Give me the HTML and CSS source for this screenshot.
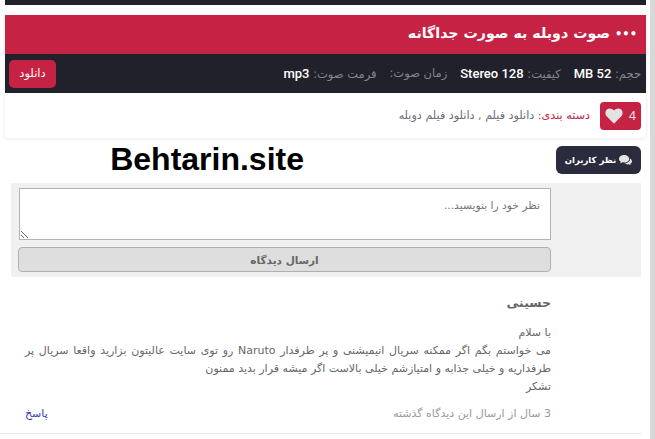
FILE: index.html
```html
<!DOCTYPE html>
<html lang="fa" dir="rtl">
<head>
    <meta charset="UTF-8">
    <title>نظر کاربران</title>
    <link rel="stylesheet" href="styles.css">
</head>
<body>
    <div class="scroll-strip"></div>
    <div class="page">
        <div class="top-bar"></div>

        <div class="download-card">
            <h2 class="audio-title"><span class="dots">•••</span> صوت دوبله به صورت جداگانه</h2>
            <div class="audio-info">
                <div class="info-items">
                    <span class="info-item">حجم: <b>52 MB</b></span>
                    <span class="info-item">کیفیت: <b>128 Stereo</b></span>
                    <span class="info-item">زمان صوت:</span>
                    <span class="info-item">فرمت صوت: <b>mp3</b></span>
                </div>
                <a class="download-btn">دانلود</a>
            </div>
            <div class="meta-row">
                <div class="like-box">
                    <span class="like-count">4</span>
                    <svg class="heart" viewBox="0 0 24 22" width="24" height="22"><path d="M12 21.5 2.6 12.2C-.6 9-.5 4.4 2.3 2 5 -.4 9.300 .3 12 3.600 14.700 .3 19 -.4 21.700 2c2.800 2.400 2.900 7 -.3 10.200z"/></svg>
                </div>
                <div class="categories"><span class="cat-label">دسته بندی:</span> دانلود فیلم , دانلود فیلم دوبله</div>
            </div>
        </div>

        <div class="comments-head">
            <a class="comments-tab">
                <svg viewBox="0 0 24 20" width="13" height="11"><path d="M9.500 0C4.300 0 0 3.100 0 7c0 2.200 1.300 4.100 3.400 5.400-.3 1-.9 1.900-1.700 2.700 1.700-.2 3.300-.9 4.600-1.800 1 .2 2 .3 3.200 .3 5.200 0 9.500-3.200 9.500-6.600S14.700 0 9.500 0z"/><path d="M20.500 6.500c.1 .3 .1 .5 .1 .8 0 4.300-4.500 7.700-10.200 7.900 1.400 1.300 3.400 2 5.600 2 .8 0 1.600-.1 2.300-.3 1 .7 2.300 1.200 3.700 1.400-.6-.6-1.100-1.400-1.400-2.200C22.900 15 24 13.400 24 11.700c0-2.100-1.400-4-3.500-5.200z"/></svg>
                نظر کاربران
            </a>
            <div class="site-name" dir="ltr">Behtarin.site</div>
        </div>

        <form class="comment-form">
            <textarea class="comment-input" placeholder="نظر خود را بنویسید..."></textarea>
            <button class="comment-send" type="button">ارسال دیدگاه</button>
        </form>

        <div class="comment">
            <h4 class="comment-author">حسینی</h4>
            <p class="comment-text">با سلام<br>
            می خواستم بگم اگر ممکنه سریال انیمیشنی و پر طرفدار Naruto رو توی سایت عالیتون بزارید واقعا سریال پر طرفداریه و خیلی جذابه و امتیازشم خیلی بالاست اگر میشه قرار بدید ممنون<br>
            تشکر</p>
            <div class="comment-foot">
                <span class="comment-date">3 سال از ارسال این دیدگاه گذشته</span>
                <a class="comment-reply">پاسخ</a>
            </div>
        </div>
    </div>
</body>
</html>
```

FILE: styles.css
```css
html, body {
    margin: 0;
    padding: 0;
    height: 439px;
    overflow: hidden;
}

body {
    background: #fff;
    font-family: "DejaVu Sans", sans-serif;
    position: relative;
}

.scroll-strip {
    position: absolute;
    top: 0;
    right: 0;
    bottom: 0;
    width: 5px;
    background: #d8d8d8;
}

.page {
    width: 641px;
    margin-right: 9px;
    height: 439px;
    background: #fff;
}

.top-bar {
    height: 5px;
    background: #20212a;
    margin-bottom: 10px;
}

.download-card {
    background: #fff;
    border-radius: 0 0 4px 4px;
    box-shadow: 0 1px 4px rgba(0,0,0,0.09);
}

.audio-title {
    margin: 0;
    height: 39px;
    line-height: 37px;
    padding-right: 9px;
    background: #c52244;
    color: #fff;
    font-size: 14.200px;
    font-weight: bold;
}

.dots {
    font-size: 11.500px;
    letter-spacing: -1.800px;
}

.audio-info {
    display: flex;
    justify-content: space-between;
    align-items: center;
    height: 39px;
    padding: 0 5px 0 4px;
    background: #20212a;
    color: #85858f;
    font-size: 11.500px;
}

.info-items {
    display: flex;
    gap: 13px;
}

.info-item b {
    color: #fff;
    font-family: Roboto, sans-serif;
    font-weight: 500;
    font-size: 13px;
}

.download-btn {
    width: 47px;
    height: 28px;
    line-height: 26px;
    text-align: center;
    background: #c52244;
    color: #fff;
    font-size: 11.500px;
    border-radius: 5px;
}

.meta-row {
    display: flex;
    align-items: center;
    gap: 10px;
    height: 45px;
    padding-right: 5px;
}

.like-box {
    display: flex;
    align-items: center;
    gap: 6px;
    width: 41px;
    height: 28px;
    padding-right: 5px;
    box-sizing: border-box;
    background: #c52244;
    border-radius: 4px;
    color: #ddd;
    font-family: Roboto, sans-serif;
    font-size: 13px;
}

.heart {
    fill: #e3e3e3;
    width: 18px;
    height: 16px;
}

.categories {
    font-size: 11.200px;
    color: #6a6b7c;
}

.cat-label {
    color: #c52244;
}

.comments-head {
    display: flex;
    align-items: center;
    height: 45px;
    padding-right: 5px;
    box-sizing: border-box;
}

.comments-tab {
    display: flex;
    align-items: center;
    justify-content: center;
    gap: 3px;
    width: 85px;
    height: 28px;
    margin-top: -1px;
    background: #2a2b3d;
    color: #fff;
    font-size: 8.500px;
    font-weight: bold;
    border-radius: 6px;
}

.comments-tab svg {
    fill: #e4e4e4;
}

.site-name {
    margin-right: 252px;
    margin-top: -3px;
    color: #000;
    font-family: "Liberation Sans", sans-serif;
    font-size: 32px;
    font-weight: bold;
    white-space: nowrap;
}

.comment-form {
    margin: 0 5px 0 6px;
    padding: 5px 90px 5px 8px;
    background: #f0f0f0;
    height: 84px;
    display: flex;
    flex-direction: column;
    gap: 7px;
}

.comment-input {
    display: block;
    width: 100%;
    height: 52px;
    box-sizing: border-box;
    margin: 0;
    padding: 10px 10px 6px;
    border: 1px solid #b3b3b3;
    background: #fff;
    font-family: "DejaVu Sans", sans-serif;
    font-size: 10.700px;
    resize: both;
}

.comment-input::placeholder {
    color: #757575;
}

.comment-send {
    width: 533px;
    height: 25px;
    padding: 0;
    border: 1px solid #b0b0b0;
    border-radius: 4px;
    background: #dedede;
    color: #666;
    font-family: "DejaVu Sans", sans-serif;
    font-size: 10.500px;
    font-weight: bold;
}

.comment {
    margin: 0 5px 0 -5px;
    padding: 17px 90px 0 25px;
    border-bottom: 1px solid #e6e6e6;
    height: 139px;
    color: #666;
}

.comment-author {
    margin: 0 0 12px;
    font-size: 12.500px;
    line-height: 18px;
    font-weight: bold;
    color: #666;
}

.comment-text {
    margin: 0;
    font-size: 11px;
    line-height: 18px;
    text-align: justify;
}

.comment-foot {
    display: flex;
    justify-content: space-between;
    margin-top: 9px;
    font-size: 11px;
    line-height: 18px;
}

.comment-date {
    color: #999;
}

.comment-reply {
    color: #3a3fb0;
}
```
